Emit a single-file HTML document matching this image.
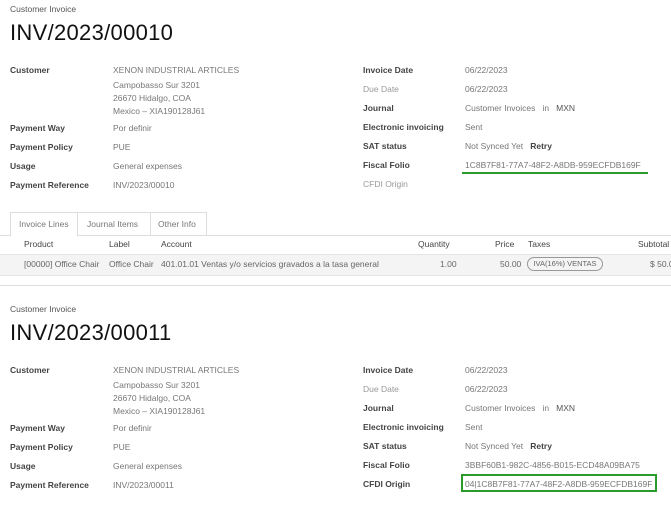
<!DOCTYPE html>
<html><head><style>
body{margin:0;width:671px;height:505px;background:#fff;font-family:"Liberation Sans",sans-serif;position:relative;overflow:hidden;color:#333}
div{position:absolute;white-space:nowrap}
.s{font-size:8.5px;color:#555}
.t{font-size:22px;color:#111;letter-spacing:0.3px}
.l{font-size:8.5px;color:#444;font-weight:bold}
.lg{font-size:8.5px;color:#999}
.v{font-size:8.5px;color:#777}
.h{font-size:8.5px;color:#444}
</style></head><body>

<div class="s" style="left:10px;top:4px">Customer Invoice</div>
<div class="t" style="left:10px;top:20px">INV/2023/00010</div>

<div class="l" style="left:10px;top:65px">Customer</div>
<div class="v" style="left:113px;top:65px">XENON INDUSTRIAL ARTICLES</div>
<div class="v" style="left:113px;top:80px">Campobasso Sur 3201</div>
<div class="v" style="left:113px;top:93px">26670 Hidalgo, COA</div>
<div class="v" style="left:113px;top:106px">Mexico – XIA190128J61</div>
<div class="l" style="left:10px;top:123px">Payment Way</div><div class="v" style="left:113px;top:123px">Por definir</div>
<div class="l" style="left:10px;top:142px">Payment Policy</div><div class="v" style="left:113px;top:142px">PUE</div>
<div class="l" style="left:10px;top:161px">Usage</div><div class="v" style="left:113px;top:161px">General expenses</div>
<div class="l" style="left:10px;top:180px">Payment Reference</div><div class="v" style="left:113px;top:180px">INV/2023/00010</div>

<div class="l" style="left:363px;top:65px">Invoice Date</div><div class="v" style="left:465px;top:65px">06/22/2023</div>
<div class="lg" style="left:363px;top:84px">Due Date</div><div class="v" style="left:465px;top:84px">06/22/2023</div>
<div class="l" style="left:363px;top:103px">Journal</div><div class="v" style="left:465px;top:103px">Customer Invoices &nbsp;&nbsp;in &nbsp;&nbsp;<span style="color:#555">MXN</span></div>
<div class="l" style="left:363px;top:122px">Electronic invoicing</div><div class="v" style="left:465px;top:122px">Sent</div>
<div class="l" style="left:363px;top:141px">SAT status</div><div class="v" style="left:465px;top:141px">Not Synced Yet &nbsp;&nbsp;<span style="color:#444;font-weight:bold">Retry</span></div>
<div class="l" style="left:363px;top:160px">Fiscal Folio</div><div class="v" style="left:465px;top:160px">1C8B7F81-77A7-48F2-A8DB-959ECFDB169F</div>
<div style="left:462px;top:172px;width:186px;height:2px;background:#2a9a2a"></div>
<div class="lg" style="left:363px;top:179px">CFDI Origin</div>

<!-- tabs -->
<div style="left:0;top:235px;width:671px;height:1px;background:#ddd"></div>
<div style="left:10px;top:212px;width:66px;height:23px;border:1px solid #ddd;border-bottom:1px solid #fff;background:#fff"></div>
<div style="left:76px;top:212px;width:74px;height:22px;border:1px solid #ddd;border-left:none;border-bottom:none"></div>
<div style="left:150px;top:212px;width:56px;height:22px;border:1px solid #ddd;border-left:none;border-bottom:none"></div>
<div class="v" style="left:19px;top:219px">Invoice Lines</div>
<div class="v" style="left:87px;top:219px">Journal Items</div>
<div class="v" style="left:158px;top:219px">Other Info</div>

<div class="h" style="left:24px;top:239px">Product</div>
<div class="h" style="left:109px;top:239px">Label</div>
<div class="h" style="left:161px;top:239px">Account</div>
<div class="h" style="left:418px;top:239px">Quantity</div>
<div class="h" style="left:495px;top:239px">Price</div>
<div class="h" style="left:528px;top:239px">Taxes</div>
<div class="h" style="left:638px;top:239px">Subtotal</div>
<div style="left:0;top:254px;width:671px;height:20px;background:#f4f4f4;border-top:1px solid #e4e4e4;border-bottom:1px solid #e4e4e4"></div>
<div class="v" style="left:24px;top:259px;color:#666">[00000] Office Chair</div>
<div class="v" style="left:109px;top:259px;color:#666">Office Chair</div>
<div class="v" style="left:161px;top:259px;color:#666">401.01.01 Ventas y/o servicios gravados a la tasa general</div>
<div class="v" style="left:440px;top:259px;color:#666">1.00</div>
<div class="v" style="left:500px;top:259px;color:#666">50.00</div>
<div style="left:527px;top:257px;width:74px;height:12px;border:1px solid #999;border-radius:7px;font-size:7.5px;color:#666;text-align:center;line-height:12px">IVA(16%) VENTAS</div>
<div class="v" style="left:650px;top:259px;color:#666">$ 50.0</div>
<div style="left:0;top:285px;width:671px;height:1px;background:#ddd"></div>

<!-- second -->
<div class="s" style="left:10px;top:304px">Customer Invoice</div>
<div class="t" style="left:10px;top:320px">INV/2023/00011</div>

<div class="l" style="left:10px;top:365px">Customer</div>
<div class="v" style="left:113px;top:365px">XENON INDUSTRIAL ARTICLES</div>
<div class="v" style="left:113px;top:380px">Campobasso Sur 3201</div>
<div class="v" style="left:113px;top:393px">26670 Hidalgo, COA</div>
<div class="v" style="left:113px;top:406px">Mexico – XIA190128J61</div>
<div class="l" style="left:10px;top:423px">Payment Way</div><div class="v" style="left:113px;top:423px">Por definir</div>
<div class="l" style="left:10px;top:442px">Payment Policy</div><div class="v" style="left:113px;top:442px">PUE</div>
<div class="l" style="left:10px;top:461px">Usage</div><div class="v" style="left:113px;top:461px">General expenses</div>
<div class="l" style="left:10px;top:480px">Payment Reference</div><div class="v" style="left:113px;top:480px">INV/2023/00011</div>

<div class="l" style="left:363px;top:365px">Invoice Date</div><div class="v" style="left:465px;top:365px">06/22/2023</div>
<div class="lg" style="left:363px;top:384px">Due Date</div><div class="v" style="left:465px;top:384px">06/22/2023</div>
<div class="l" style="left:363px;top:403px">Journal</div><div class="v" style="left:465px;top:403px">Customer Invoices &nbsp;&nbsp;in &nbsp;&nbsp;<span style="color:#555">MXN</span></div>
<div class="l" style="left:363px;top:422px">Electronic invoicing</div><div class="v" style="left:465px;top:422px">Sent</div>
<div class="l" style="left:363px;top:441px">SAT status</div><div class="v" style="left:465px;top:441px">Not Synced Yet &nbsp;&nbsp;<span style="color:#444;font-weight:bold">Retry</span></div>
<div class="l" style="left:363px;top:460px">Fiscal Folio</div><div class="v" style="left:465px;top:460px">3BBF60B1-982C-4856-B015-ECD48A09BA75</div>
<div class="l" style="left:363px;top:479px">CFDI Origin</div>
<div style="left:461px;top:474px;width:196px;height:18px;border:2px solid #2a9a2a;box-sizing:border-box"></div>
<div class="v" style="left:465px;top:479px">04|1C8B7F81-77A7-48F2-A8DB-959ECFDB169F</div>
</body></html>
